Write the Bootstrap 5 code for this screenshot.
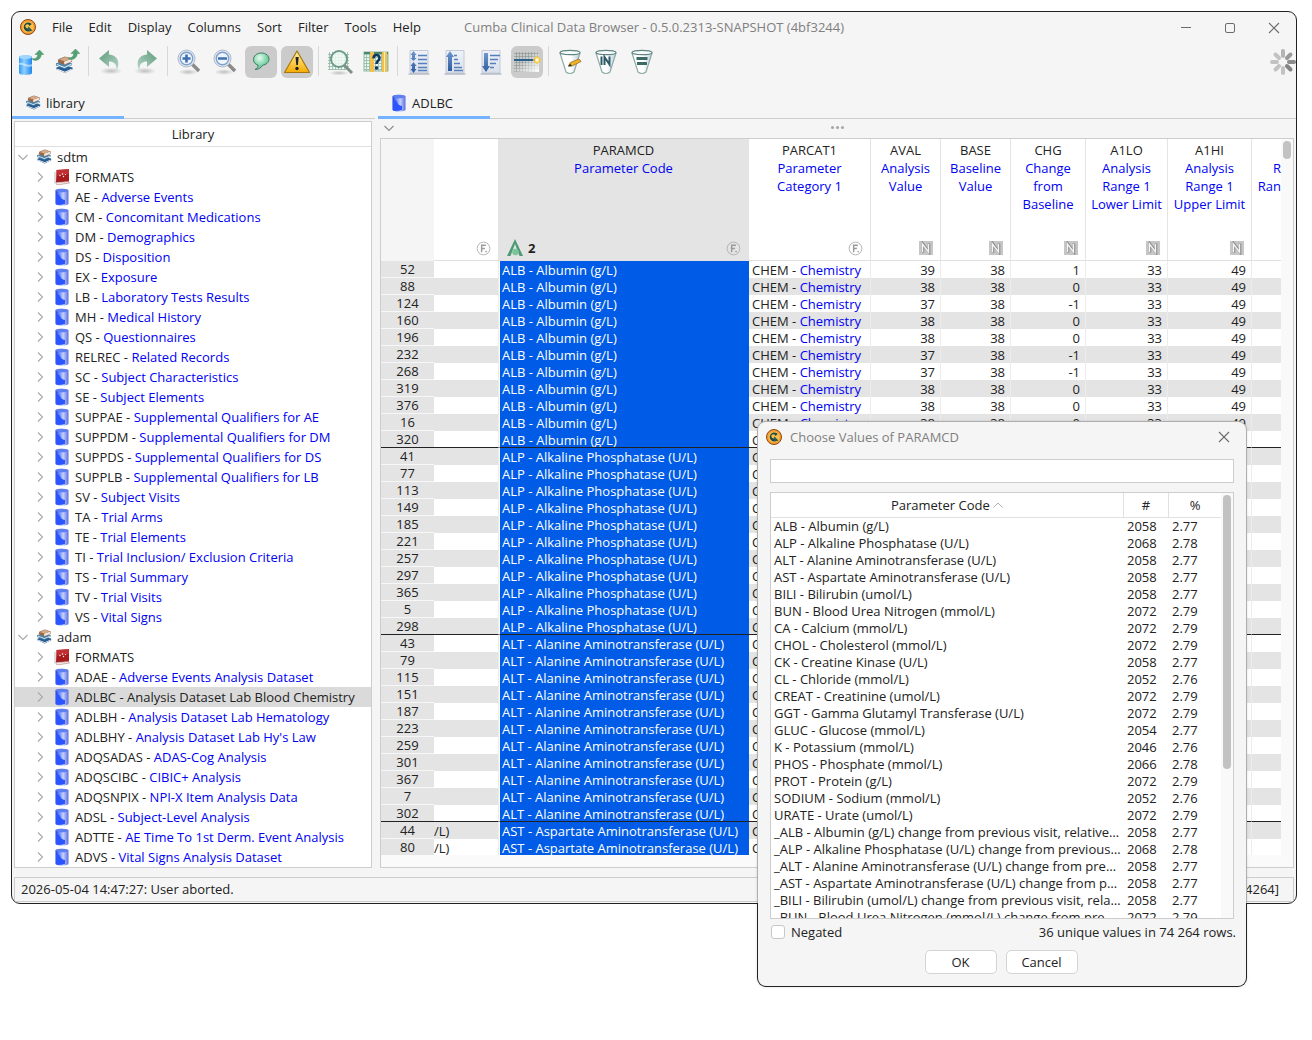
<!DOCTYPE html>
<html lang="en">
<head>
<meta charset="utf-8">
<meta name="viewport" content="width=device-width, initial-scale=1">
<title>Cumba Clinical Data Browser</title>
<link rel="stylesheet" href="https://cdn.jsdelivr.net/npm/bootstrap@5.3.0/dist/css/bootstrap.min.css">
<style>
  :root { --line:#cdcdcd; --panel:#f5f5f5; --stripe:#e4e4e4; --ink:#222; --label:#0000f5; --pick:#005ce6; }
  body { font-family:"Open Sans","Noto Sans",sans-serif; font-size:13px; line-height:18px; color:var(--ink); background:#fff; }
  button, input { font:inherit; color:inherit; }
  svg { display:block; flex:none; }
  .desktop { padding:11px 15px 0 11px; min-height:100vh; }
  .app-frame { background:var(--panel); border:1px solid #222; border-radius:9px; overflow:hidden; }
  .title-row { display:grid; grid-template-columns:1fr auto 1fr; height:31px; align-items:center; }
  .title-row .menus { padding-left:8px; }
  .title-row .menus, .title-row .dim { padding-bottom:2px; }
  .plain-btn { border:0; background:none; padding:0 8px; }
  .win-btn { width:44px; height:31px; padding:0; display:grid; place-items:center; border:0; background:none; color:#6b6b6b; }
  .dim { color:#808080; }
  .tools { padding:3px 0 12px 3px; gap:4px; height:47px; }
  .tool { width:32px; height:32px; padding:0; border:0; background:none; border-radius:6px; display:grid; place-items:center; }
  .tool.on { background:#cbcbcb; }
  .sep { width:3px; height:30px; background:linear-gradient(#d8d8d8,#d8d8d8) 1px 0/1px 100% no-repeat; }
  .side { width:363px; flex:none; }
  .work { min-width:0; }
  .tabs { box-shadow:inset 0 -1px var(--line); height:29px; }
  .tab-btn { width:112px; border:0; background:none; border-bottom:3px solid #75b3ff; padding:0 0 0 13px; gap:5px; }
  .main-tabs { margin-left:3px; }
  .boxed { border:1px solid var(--line); background:#fff; }
  .tree-box { margin:2px 3px 0 2px; }
  .tree-head { height:25px; line-height:24px; border-bottom:1px solid #e0e0e0; }
  .tree-row { height:20px; line-height:20px; white-space:nowrap; }
  .tree-row.top { padding-left:3px; color:#a9a9a9; }
  .tree-row.top span { color:var(--ink); }
  .tree-row.sub { padding-left:20px; }
  .tree-row .ico { margin:0 5px 0 8px; }
  .tree-row.sub .ico { margin:0 5px 0 9px; }
  .tree-row.current { background:#dadada; }
  .lbl { color:var(--label); }
  .tree-row.current .lbl { color:var(--ink); }
  .strip { height:19px; margin-left:3px; padding:0 16px 2px 6px; color:#8a8a8a; }
  .grid-box { margin:0 2px 0 5px; height:730px; }
  .clip { overflow:hidden; min-width:0; background:#fafafa; }
  .clip-in { height:716px; overflow:hidden; }
  .data { table-layout:fixed; border-collapse:separate; border-spacing:0; width:901px; }
  .data th { font-weight:400; padding:0; height:122px; vertical-align:top; background:#fff; border-right:1px solid #e4e4e4; border-bottom:1px solid #e0e0e0; }
  .data th.corner { background:var(--panel); border:0; }
  .data th.picked { background:var(--stripe); }
  .head-in { height:121px; padding:2px 0 4px; overflow:hidden; }
  .head-foot { height:16px; padding:0 7px; }
  .data td { height:17px; line-height:16px; padding:1px 5px 0 3px; overflow:hidden; white-space:nowrap; background:#fff; border-right:1px solid #ececec; }
  .data tr:nth-child(even) td { background:var(--stripe); }
  .data tbody th { height:17px; line-height:16px; background:var(--stripe); border-bottom:1px solid #f7f7f7; border-right:0; text-align:center; }
  .data tbody td.val { background:var(--pick); color:#fff; padding-left:2px; border-left:1px solid #fff; border-right:0; }
  .data td.tail { text-align:right; padding-right:52px; padding-left:0; direction:ltr; }
  .data td.num { text-align:right; }
  .data tr.last-of td { border-bottom:1px solid #222; line-height:14px; padding-top:2px; }
  .data tr.last-of th { border-bottom:1px solid #222; }
  .bar { width:12px; flex:none; background:#f9f9f9; padding:2px 2px 0; }
  .thumb { width:8px; border-radius:4px; background:#c2c2c2; }
  .status { margin:9px 2px 1px; height:25px; border:1px solid var(--line); padding:0 14px 1px 6px; }
  .dlg { position:absolute; left:757px; top:421px; width:490px; padding:1px; border-radius:9px; background:linear-gradient(#aeaeae 482px,#222 482px); box-shadow:0 0 3px rgba(0,0,0,.12); }
  .dlg-in { background:var(--panel); border-radius:8px; padding:0 12px 12px; }
  .dlg-title { height:30px; margin:0 -12px; padding-left:8px; }
  .find { display:block; width:100%; height:24px; border:1px solid var(--line); background:#fff; padding:0 6px; margin-top:7px; }
  .list-box { height:427px; margin-top:9px; overflow:hidden; }
  .vals { table-layout:fixed; border-collapse:separate; border-spacing:0; width:450px; }
  .vals th { font-weight:400; height:25px; line-height:24px; padding:0; text-align:center; border-bottom:1px solid #e0e0e0; border-right:1px solid #e0e0e0; }
  .vals th:last-child { border-right:0; }
  .vals td { height:17px; line-height:17px; padding:0 3px; overflow:hidden; white-space:nowrap; text-overflow:ellipsis; }
  .neg { appearance:none; width:14px; height:14px; border:1px solid #c8c8c8; border-radius:3px; background:#fff; margin:0 6px 0 1px; }
  .neg:checked { background:var(--pick); }
  .counts { margin-right:-2px; }
  .acts { gap:9px; margin-top:9px; padding-right:2px; }
  .act { width:72px; height:24px; border:1px solid #d4d4d4; border-radius:5px; background:#fff; padding:0; line-height:22px; }
</style>
<script src="https://cdn.jsdelivr.net/npm/bootstrap@5.3.0/dist/js/bootstrap.bundle.min.js"></script>
</head>
<body>
<svg width="0" height="0" class="position-absolute" aria-hidden="true">
  <defs>
    <linearGradient id="gBlue"><stop offset="0" stop-color="#1a35e8"/><stop offset=".3" stop-color="#6d8ef8"/><stop offset=".6" stop-color="#c3d0fd"/><stop offset="1" stop-color="#5a6be0"/></linearGradient>
    <linearGradient id="gSky"><stop offset="0" stop-color="#2f9cf5"/><stop offset=".4" stop-color="#8fd0ff"/><stop offset="1" stop-color="#1f86ee"/></linearGradient>
    <linearGradient id="gGreen" x2="1" y2="1"><stop offset="0" stop-color="#5c9c7c"/><stop offset="1" stop-color="#b7d6c6"/></linearGradient>
    <linearGradient id="gWarn" x2="0" y2="1"><stop offset="0" stop-color="#fff3b0"/><stop offset="1" stop-color="#f5ac00"/></linearGradient>
    <linearGradient id="gPage" x2="0" y2="1"><stop offset="0" stop-color="#eef2f8"/><stop offset="1" stop-color="#d8dfea"/></linearGradient>
    <linearGradient id="gArrow" x2="0" y2="1"><stop offset="0" stop-color="#6f98cf"/><stop offset="1" stop-color="#2f5c9e"/></linearGradient>
    <linearGradient id="gCup"><stop offset="0" stop-color="#fff"/><stop offset=".55" stop-color="#fff"/><stop offset="1" stop-color="#b8cdd8"/></linearGradient>
    <radialGradient id="gShade"><stop offset="0" stop-color="#000" stop-opacity=".22"/><stop offset="1" stop-color="#000" stop-opacity="0"/></radialGradient>
    <radialGradient id="gBubble" cx=".4" cy=".3"><stop offset="0" stop-color="#e6fbef"/><stop offset="1" stop-color="#74cfa0"/></radialGradient>
    <pattern id="mesh" width="3" height="3" patternUnits="userSpaceOnUse"><path d="M0 .5H3M.5 0V3" stroke="#8fb7a4" stroke-width=".8"/></pattern>
    <pattern id="meshGrey" width="3" height="3" patternUnits="userSpaceOnUse"><path d="M0 .5H3M.5 0V3" stroke="#8d9a94" stroke-width=".7"/></pattern>
    <symbol id="logo" viewBox="0 0 16 16"><circle cx="8" cy="8" r="7.500" fill="#f79a2e" stroke="#8a4a12"/><circle cx="8" cy="8" r="5.600" fill="#fcc04d"/><path d="M11.800 5A4.600 4.600 0 1 0 11.800 11L9 8.600A2 2 0 1 1 9.400 6.900Z" fill="#1e4a46"/><path d="M8.200 7.200l4.300 4.600H8z" fill="#2c5f55"/></symbol>
    <symbol id="db" viewBox="0 0 14 18"><path d="M.5 2.500C.5 0 13.500 0 13.500 2.500V15.500C13.500 18.300 .5 18.300 .5 15.500Z" fill="url(#gBlue)"/><ellipse cx="7" cy="2.500" rx="6" ry="1.700" fill="#5f7ff0"/><path d="M1 7C3 5.500 4.500 6.500 5.500 9S8.500 11.500 10 12V15.800C7 17.300 1 17 1 15.500Z" fill="#2a55ff"/></symbol>
    <symbol id="books" viewBox="0 0 20 20"><path d="M2 14l9 4 8-4v-2l-9-2-8 2z" fill="#2a5d90"/><path d="M3 14.500l8 3 7-3v-1l-7 3-8-3z" fill="#fff"/><path d="M1.500 10l9 3.500 8-4V7.500l-9-2-8 2z" fill="#4a86ad"/><path d="M2.500 9.500l8 3 7.500-3.500V8l-7.500 3.500-8-3z" fill="#eef3f6"/><path d="M3.500 6.500l7 3L18.500 6V3L11 .5 4 3.500z" fill="#9a6847"/><path d="M10 6l8-3V5.500l-7.500 3.500z" fill="#f4e9df"/><path d="M5 4l6-3L17 3l-6 2.500z" fill="#d3ab8c"/></symbol>
    <symbol id="fmt" viewBox="0 0 16 16"><path d="M2.500 1L15 0V12.500L2 13.500Z" fill="#a81a1c"/><path d="M2.500 1L15 0V5L2.500 7Z" fill="#d9434a" opacity=".5"/><path d="M1.500 13.500L14.500 12.500 15.500 14 3 16Z" fill="#f2eaea" stroke="#a66" stroke-width=".5"/><path d="M1 3V14" stroke="#bbb"/><circle cx="6" cy="6.500" r=".7" fill="#fff"/><circle cx="8.500" cy="5" r=".7" fill="#fff"/><circle cx="9.500" cy="7.500" r=".7" fill="#fff"/><circle cx="11.500" cy="5.500" r=".6" fill="#fff"/></symbol>
    <symbol id="go" viewBox="0 0 12 12"><path d="M0 8.500C1 11.500 8.500 11.500 9.300 4.500H11.800L7.500 0 3 4.500H5.800C5.500 8 3 9.500 0 8.500Z" fill="#55a276" stroke="#3e8a60" stroke-width=".5"/></symbol>
    <symbol id="undoIco" viewBox="0 0 26 26"><ellipse cx="14" cy="22" rx="11" ry="3.500" fill="url(#gShade)"/><path d="M2 9.500L12 1V5.500C20 6 24 13 19.500 21.500 20 15 17 12.500 12 12.500V18Z" fill="url(#gGreen)"/></symbol>
    <symbol id="lensIn" viewBox="0 0 26 26"><ellipse cx="12" cy="23" rx="10" ry="3" fill="url(#gShade)"/><path d="M16 15l7 7" stroke="#8b8b8b" stroke-width="3.500"/><circle cx="10.500" cy="9.500" r="8.500" fill="#dfe8f5" stroke="#b0b8c4" stroke-width="1"/><circle cx="10.500" cy="9.500" r="6.200" fill="#eef4fc" stroke="#7f9fcc" stroke-width="1.400"/></symbol>
    <symbol id="cup" viewBox="0 0 26 28"><path d="M3 5L9 24Q13 27 17 24L23 5Z" fill="url(#gCup)" stroke="#8caaa6" stroke-width="1.200"/><ellipse cx="13" cy="4.500" rx="10" ry="2.200" fill="#f7fafb" stroke="#5f8580" stroke-width="1.200"/></symbol>
    <symbol id="tagF" viewBox="0 0 16 16"><circle cx="8" cy="8" r="6.800" fill="none" stroke="#b2b2b2" stroke-width="1"/><path d="M6 12V4.500H10.500M6 8H9.500" fill="none" stroke="#999" stroke-width="1.500"/><rect x="10" y="10.500" width="1.500" height="1.500" fill="#999"/></symbol>
    <symbol id="tagN" viewBox="0 0 14 14"><rect width="14" height="14" fill="#c6c6c6"/><path d="M4 11.500V3L10 11V2.500" fill="none" stroke="#8a8a8a" stroke-width="2.600"/><path d="M3.500 11V3L9.500 11V3" fill="none" stroke="#f5f5f5" stroke-width="1.400"/></symbol>
    <symbol id="shut" viewBox="0 0 12 12"><path d="M1 1l10 10M11 1L1 11" stroke="currentColor" stroke-width="1.100"/></symbol>
    <symbol id="right" viewBox="0 0 10 10"><path d="M3 .5l4.500 4.500L3 9.500" fill="none" stroke="#a9a9a9" stroke-width="1.100"/></symbol>
    <symbol id="down" viewBox="0 0 10 10"><path d="M.5 3l4.500 4.500L9.500 3" fill="none" stroke="currentColor" stroke-width="1.100"/></symbol>
  </defs>
</svg>

<div class="desktop">
  <main class="app-frame">
    <header class="title-row">
      <nav class="menus d-flex align-items-center" aria-label="Main menu">
        <svg width="16" height="16" class="me-2"><use href="#logo"/></svg>
        <button class="plain-btn">File</button><button class="plain-btn">Edit</button><button class="plain-btn">Display</button><button class="plain-btn">Columns</button><button class="plain-btn">Sort</button><button class="plain-btn">Filter</button><button class="plain-btn">Tools</button><button class="plain-btn">Help</button>
      </nav>
      <div class="dim text-nowrap">Cumba Clinical Data Browser - 0.5.0.2313-SNAPSHOT (4bf3244)</div>
      <div class="d-flex justify-content-end">
        <button class="win-btn" aria-label="Minimize"><svg width="12" height="12"><path d="M1 5.500H11" stroke="currentColor"/></svg></button>
        <button class="win-btn" aria-label="Maximize"><svg width="12" height="12"><rect x="1.500" y="1.500" width="9" height="9" rx="1.500" fill="none" stroke="currentColor"/></svg></button>
        <button class="win-btn" aria-label="Close"><svg width="12" height="12"><use href="#shut"/></svg></button>
      </div>
    </header>

    <div class="tools d-flex" role="toolbar" aria-label="Tools">
      <button class="tool" aria-label="Open dataset"><svg width="28" height="26" viewBox="0 0 28 26"><path d="M2 8C2 6 15 6 15 8V24C15 26.500 2 26.500 2 24Z" fill="url(#gSky)"/><ellipse cx="8.500" cy="8" rx="6.500" ry="2" fill="#9fd6ff"/><path d="M2 15C6 13 9 19 15 16" stroke="#fff" opacity=".5" fill="none" stroke-width="2"/><use href="#go" x="15" y="1" width="12" height="12"/></svg></button>
      <button class="tool" aria-label="Open library"><svg width="28" height="26" viewBox="0 0 28 26"><use href="#books" x="1" y="7" width="20" height="19"/><use href="#go" x="15" y="0" width="12" height="12"/></svg></button>
      <span class="sep"></span>
      <button class="tool" aria-label="Undo"><svg width="26" height="26"><use href="#undoIco"/></svg></button>
      <button class="tool" aria-label="Redo"><svg width="26" height="26" viewBox="0 0 26 26"><use href="#undoIco" width="26" height="26" transform="matrix(-1 0 0 1 26 0)"/></svg></button>
      <span class="sep"></span>
      <button class="tool" aria-label="Zoom in"><svg width="26" height="26" viewBox="0 0 26 26"><use href="#lensIn" width="26" height="26"/><path d="M10.500 5.500v8M6.500 9.500h8" stroke="#3f6fae" stroke-width="2.600"/></svg></button>
      <button class="tool" aria-label="Zoom out"><svg width="26" height="26" viewBox="0 0 26 26"><use href="#lensIn" width="26" height="26"/><path d="M6 9.500h9" stroke="#3f6fae" stroke-width="2.600"/></svg></button>
      <button class="tool on" aria-label="Tooltips"><svg width="20" height="24" viewBox="0 0 20 20"><path d="M10.500 1C5.500 1 2.500 4 2.500 7.500c0 3 2 4.800 4.500 5.500.3 2-1 3.500-3 4.500 3.500 0 6-1.500 7.500-4.300C15 12.700 18 10.500 18 7.300 18 3.800 15 1 10.500 1Z" fill="url(#gBubble)" stroke="#3f7a66"/></svg></button>
      <button class="tool on" aria-label="Warnings"><svg width="28" height="26" viewBox="0 0 28 26"><path d="M14 2L26.500 23.500H1.500Z" fill="url(#gWarn)" stroke="#a8760c" stroke-width="1.200" stroke-linejoin="round"/><path d="M12.500 8h3.200l-.8 8h-1.600z" fill="#222"/><circle cx="14" cy="19.500" r="1.700" fill="#222"/></svg></button>
      <span class="sep"></span>
      <button class="tool" aria-label="Find"><svg width="28" height="28" viewBox="0 0 28 28"><rect x="2" y="4" width="21" height="18" fill="url(#mesh)"/><ellipse cx="13" cy="25" rx="10" ry="2.500" fill="url(#gShade)"/><path d="M18 17l8 8" stroke="#7d8d88" stroke-width="3"/><circle cx="13" cy="11" r="8" fill="#f1faf6" fill-opacity=".85" stroke="#6f9c8a" stroke-width="2"/></svg></button>
      <button class="tool" aria-label="Find column"><svg width="26" height="22" viewBox="0 0 26 22"><rect x="1" y="1" width="24" height="19" fill="#e9f5ee" stroke="#8fb7a4"/><rect x="1" y="1" width="24" height="19" fill="url(#mesh)"/><path d="M1 2H25" stroke="#4a8a6b" stroke-width="2"/><rect x="7" y="1" width="4" height="20" fill="#f3c14b"/><rect x="19" y="1" width="5" height="20" fill="#f3c14b"/><rect x="21" y="1" width="1" height="20" fill="#fff0bf"/><path d="M10.500 7.500C10.500 3 16.500 3 16.500 7 16.500 10 13.500 9.500 13.500 13" fill="none" stroke="#123a5c" stroke-width="2.600"/><circle cx="13.500" cy="17" r="1.800" fill="#123a5c"/></svg></button>
      <span class="sep"></span>
      <button class="tool" aria-label="Unsorted"><svg width="24" height="26" viewBox="0 0 24 26"><path d="M3 1.500H21V24H3Z" fill="url(#gPage)" stroke="#c3cad6"/><path d="M1.500 25H22.500" stroke="#9aa1ae"/><path d="M6.500 2L9.500 6H8v3h1.500L6.500 12l-3-3H5V6H3.500ZM6.500 13L9.500 17H8v3h1.500L6.500 24l-3-4H5V17H3.500Z" fill="url(#gArrow)"/><path d="M11 6.500h9M11 10.500h9M11 14.500h9M11 18.500h9M11 21.500h9" stroke="#5580bd" stroke-width="1.400"/></svg></button>
      <button class="tool" aria-label="Sort ascending"><svg width="24" height="26" viewBox="0 0 24 26"><path d="M3 1.500H21V24H3Z" fill="url(#gPage)" stroke="#c3cad6"/><path d="M1.500 25H22.500" stroke="#9aa1ae"/><path d="M7 2L11 8H9V22H5V8H3Z" fill="url(#gArrow)"/><path d="M11 6.500h3M11 10.500h4M11 14.500h6M11 18.500h8M11 21.500h9" stroke="#5580bd" stroke-width="1.400"/></svg></button>
      <button class="tool" aria-label="Sort descending"><svg width="24" height="26" viewBox="0 0 24 26"><path d="M3 1.500H21V24H3Z" fill="url(#gPage)" stroke="#c3cad6"/><path d="M1.500 25H22.500" stroke="#9aa1ae"/><path d="M7 23L11 17H9V4H5V17H3Z" fill="url(#gArrow)"/><path d="M11 6.500h10M11 10.500h8M11 14.500h6M11 18.500h4" stroke="#5580bd" stroke-width="1.400"/></svg></button>
      <button class="tool on" aria-label="Group separators"><svg width="28" height="24" viewBox="0 0 28 24"><linearGradient id="fade" x2="1" y2="1"><stop offset=".4" stop-color="#fff" stop-opacity="0"/><stop offset="1" stop-color="#fff"/></linearGradient><rect x="1" y="2" width="25" height="20" fill="url(#meshGrey)"/><rect x="1" y="2" width="25" height="20" fill="url(#fade)"/><path d="M1 10H23" stroke="#2b5f8c" stroke-width="1.800"/><path d="M24 6v8M20 10h8M21.500 7.500l5 5M26.500 7.500l-5 5" stroke="#ffc928" stroke-width="1.400"/><circle cx="24" cy="10" r="1.800" fill="#fffbe0"/></svg></button>
      <span class="sep"></span>
      <button class="tool" aria-label="Edit filter"><svg width="26" height="28" viewBox="0 0 26 28"><use href="#cup" width="26" height="28"/><path d="M11.500 18l2-3.500L22 11l2 2.500-9 4.500z" fill="#f0b429" stroke="#a06a1c" stroke-width=".8"/><path d="M11 18.500l2-3 2 2.500z" fill="#333"/></svg></button>
      <button class="tool" aria-label="Filter in values"><svg width="26" height="28" viewBox="0 0 26 28"><use href="#cup" width="26" height="28"/><path d="M8.500 8.500V17M11.500 17V9l5 7.500V8.500" fill="none" stroke="#2d5c68" stroke-width="2"/></svg></button>
      <button class="tool" aria-label="Filter equal"><svg width="26" height="28" viewBox="0 0 26 28"><use href="#cup" width="26" height="28"/><path d="M7.500 10.500h11M8 15.500h10" stroke="#3c6a66" stroke-width="3"/></svg></button>
      <svg class="ms-auto" width="27" height="32" viewBox="0 0 27 32" role="img" aria-label="Busy"><g stroke-width="4" stroke-linecap="round"><path d="M14 10V5" stroke="#b4b4b4"/><path d="M18 12l3.500-3.500" stroke="#999"/><path d="M20 16h5" stroke="#8c8c8c"/><path d="M18 20l3.500 3.500" stroke="#848484"/><path d="M14 22v5M10 20l-3.500 3.500M8 16H3M10 12L6.500 8.500" stroke="#c2c2c2"/></g></svg>
    </div>

    <div class="d-flex">
      <aside class="side">
        <div class="tabs d-flex"><button class="tab-btn d-flex align-items-center"><svg width="16" height="16"><use href="#books"/></svg>library</button></div>
        <div class="boxed tree-box">
          <div class="tree-head text-center">Library</div>
          <ul class="list-unstyled mb-0" id="tree" role="tree" aria-label="Library"></ul>
        </div>
      </aside>
      <section class="work flex-fill d-flex flex-column">
        <div class="tabs d-flex main-tabs"><button class="tab-btn d-flex align-items-center"><svg width="16" height="18"><use href="#db"/></svg>ADLBC</button></div>
        <div class="strip d-flex align-items-center">
          <svg width="10" height="10"><use href="#down"/></svg>
          <svg width="13" height="3" class="mx-auto"><g fill="#a6a6a6"><circle cx="1.500" cy="1.500" r="1.500"/><circle cx="6.500" cy="1.500" r="1.500"/><circle cx="11.500" cy="1.500" r="1.500"/></g></svg>
        </div>
        <div class="boxed grid-box d-flex">
          <div class="clip flex-fill"><div class="clip-in">
            <table class="data">
              <colgroup><col style="width:53px"><col style="width:65px"><col style="width:250px"><col style="width:122px"><col style="width:70px"><col style="width:70px"><col style="width:75px"><col style="width:82px"><col style="width:84px"><col></colgroup>
              <thead><tr id="heads"></tr></thead>
              <tbody id="rows"></tbody>
            </table>
          </div></div>
          <div class="bar"><div class="thumb" style="height:18px"></div></div>
        </div>
      </section>
    </div>
    <footer class="status d-flex justify-content-between align-items-center"><span>2026-05-04 14:47:27: User aborted.</span><span>[74264]</span></footer>
  </main>
</div>

<div class="dlg" role="dialog" aria-labelledby="dlgTitle">
  <div class="dlg-in">
    <div class="dlg-title d-flex align-items-center"><svg width="16" height="16" class="me-2"><use href="#logo"/></svg><span class="dim" id="dlgTitle">Choose Values of PARAMCD</span><button class="win-btn ms-auto" aria-label="Close dialog"><svg width="12" height="12"><use href="#shut"/></svg></button></div>
    <input class="find" type="text" aria-label="Search values">
    <div class="boxed list-box d-flex">
      <table class="vals">
        <colgroup><col style="width:353px"><col style="width:45px"><col></colgroup>
        <thead><tr><th>Parameter Code <svg width="10" height="10" viewBox="0 0 10 10" class="d-inline-block align-baseline"><path d="M.5 7.500L5 3l4.500 4.500" fill="none" stroke="#b5b5b5"/></svg></th><th>#</th><th>%</th></tr></thead>
        <tbody id="vals"></tbody>
      </table>
      <div class="bar"><div class="thumb" style="height:274px"></div></div>
    </div>
    <div class="d-flex align-items-center mt-1"><input class="neg" type="checkbox" id="neg"><label for="neg">Negated</label><span class="ms-auto counts">36 unique values in 74 264 rows.</span></div>
    <div class="d-flex justify-content-center acts"><button class="act">OK</button><button class="act">Cancel</button></div>
  </div>
</div>
<script>
  const use = (id, w, h, cls = '') => `<svg width="${w}" height="${h}" class="${cls}"><use href="#${id}"/></svg>`;

  // library tree
  const libraries = {
    sdtm: ['AE|Adverse Events','CM|Concomitant Medications','DM|Demographics','DS|Disposition','EX|Exposure','LB|Laboratory Tests Results','MH|Medical History','QS|Questionnaires','RELREC|Related Records','SC|Subject Characteristics','SE|Subject Elements','SUPPAE|Supplemental Qualifiers for AE','SUPPDM|Supplemental Qualifiers for DM','SUPPDS|Supplemental Qualifiers for DS','SUPPLB|Supplemental Qualifiers for LB','SV|Subject Visits','TA|Trial Arms','TE|Trial Elements','TI|Trial Inclusion/ Exclusion Criteria','TS|Trial Summary','TV|Trial Visits','VS|Vital Signs'],
    adam: ['ADAE|Adverse Events Analysis Dataset','ADLBC|Analysis Dataset Lab Blood Chemistry','ADLBH|Analysis Dataset Lab Hematology',"ADLBHY|Analysis Dataset Lab Hy's Law",'ADQSADAS|ADAS-Cog Analysis','ADQSCIBC|CIBIC+ Analysis','ADQSNPIX|NPI-X Item Analysis Data','ADSL|Subject-Level Analysis','ADTTE|AE Time To 1st Derm. Event Analysis','ADVS|Vital Signs Analysis Dataset']
  };
  let tree = '';
  for (const [lib, sets] of Object.entries(libraries)) {
    tree += `<li class="tree-row top d-flex align-items-center" role="treeitem">${use('down', 10, 10)}${use('books', 16, 16, 'ico')}<span>${lib}</span></li>`;
    tree += `<li class="tree-row sub d-flex align-items-center" role="treeitem">${use('right', 10, 10)}${use('fmt', 16, 16, 'ico')}<span>FORMATS</span></li>`;
    for (const s of sets) {
      const [code, label] = s.split('|');
      tree += `<li class="tree-row sub d-flex align-items-center${code === 'ADLBC' ? ' current' : ''}" role="treeitem">${use('right', 10, 10)}${use('db', 16, 18, 'ico')}<span>${code} - <span class="lbl">${label}</span></span></li>`;
    }
  }
  document.getElementById('tree').innerHTML = tree;

  // grid header
  const cols = [['','','F'],['PARAMCD','Parameter Code','F'],['PARCAT1','Parameter<br>Category 1','F'],['AVAL','Analysis<br>Value','N'],['BASE','Baseline<br>Value','N'],['CHG','Change<br>from<br>Baseline','N'],['A1LO','Analysis<br>Range 1<br>Lower Limit','N'],['A1HI','Analysis<br>Range 1<br>Upper Limit','N'],['&nbsp;','R<br>Ran','']];
  document.getElementById('heads').innerHTML = '<th class="corner"></th>' + cols.map(([name, label, tag], i) => {
    const sorted = name === 'PARAMCD' ? '<svg width="18" height="18" viewBox="0 0 18 18"><path d="M9 0L17 17H13.500L12 13H6L4.500 17H1Z" fill="#4f9a74"/><path d="M9 5L12 13H6Z" fill="#dcebe3"/><circle cx="9.500" cy="13" r="3.300" fill="#7cc49c"/></svg><b class="ms-1">2</b>' : '';
    const mark = tag ? use('tag' + tag, tag === 'F' ? 15 : 14, tag === 'F' ? 15 : 14, 'ms-auto') : '';
    return `<th class="${sorted ? 'picked' : ''}"><div class="head-in d-flex flex-column ${i === 8 ? 'text-end' : 'text-center'}"><span>${name}</span><span class="lbl">${label}</span><div class="head-foot d-flex align-items-center mt-auto">${sorted}${mark}</div></div></th>`;
  }).join('');

  // grid rows
  const groups = [
    ['ALB - Albumin (g/L)', [52,88,124,160,196,232,268,319,376,16,320]],
    ['ALP - Alkaline Phosphatase (U/L)', [41,77,113,149,185,221,257,297,365,5,298]],
    ['ALT - Alanine Aminotransferase (U/L)', [43,79,115,151,187,223,259,301,367,7,302]],
    ['AST - Aspartate Aminotransferase (U/L)', [44,80]]
  ];
  const aval = [39,38,37,38,38,37,37,38,38,38], chg = [1,0,-1,0,0,-1,-1,0,0,0];
  let rows = '';
  groups.forEach(([value, ids], g) => ids.forEach((id, i) => {
    const nums = g === 0 && i < 10 ? [aval[i], 38, chg[i], 33, 49] : ['', '', '', '', ''];
    rows += `<tr class="${i === 10 ? 'last-of' : ''}"><th>${id}</th><td class="tail">${g === 3 ? '/L)' : ''}</td><td class="val">${value}</td><td>CHEM - <span class="lbl">Chemistry</span></td>${nums.map(n => `<td class="num">${n}</td>`).join('')}<td></td></tr>`;
  }));
  document.getElementById('rows').innerHTML = rows;

  // distinct values
  const share = { 2058:'2.77', 2068:'2.78', 2072:'2.79', 2052:'2.76', 2054:'2.77', 2046:'2.76', 2066:'2.78' };
  const values = [['ALB - Albumin (g/L)',2058],['ALP - Alkaline Phosphatase (U/L)',2068],['ALT - Alanine Aminotransferase (U/L)',2058],['AST - Aspartate Aminotransferase (U/L)',2058],['BILI - Bilirubin (umol/L)',2058],['BUN - Blood Urea Nitrogen (mmol/L)',2072],['CA - Calcium (mmol/L)',2072],['CHOL - Cholesterol (mmol/L)',2072],['CK - Creatine Kinase (U/L)',2058],['CL - Chloride (mmol/L)',2052],['CREAT - Creatinine (umol/L)',2072],['GGT - Gamma Glutamyl Transferase (U/L)',2072],['GLUC - Glucose (mmol/L)',2054],['K - Potassium (mmol/L)',2046],['PHOS - Phosphate (mmol/L)',2066],['PROT - Protein (g/L)',2072],['SODIUM - Sodium (mmol/L)',2052],['URATE - Urate (umol/L)',2072],
    ...[['_ALB - Albumin (g/L)',2058],['_ALP - Alkaline Phosphatase (U/L)',2068],['_ALT - Alanine Aminotransferase (U/L)',2058],['_AST - Aspartate Aminotransferase (U/L)',2058],['_BILI - Bilirubin (umol/L)',2058],['_BUN - Blood Urea Nitrogen (mmol/L)',2072]].map(([t, n]) => [t + ' change from previous visit, relative to normal range', n])];
  document.getElementById('vals').innerHTML = values.map(([t, n]) => `<tr><td>${t}</td><td>${n}</td><td>${share[n]}</td></tr>`).join('');
</script>
</body>
</html>
